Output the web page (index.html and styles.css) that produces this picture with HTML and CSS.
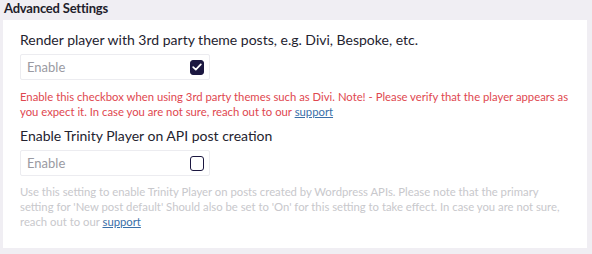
FILE: index.html
```html
<!DOCTYPE html>
<html>
<head>
    <title>Advanced Settings</title>
    <link rel="stylesheet" href="styles.css">
</head>
<body>
    <h2 class="section-title">Advanced Settings</h2>
    <div class="card">
        <div class="setting">
            <label class="setting-label">Render player with 3rd party theme posts, e.g. Divi, Bespoke, etc.</label>
            <div class="toggle-box">
                <span class="toggle-text">Enable</span>
                <span class="check checked">
                    <svg width="10" height="8" viewBox="0 0 10 8"><path d="M1.2 4.2 L3.8 6.6 L8.8 1.4" fill="none" stroke="#fff" stroke-width="1.7" stroke-linecap="round" stroke-linejoin="round"/></svg>
                </span>
            </div>
            <p class="help warn">Enable this checkbox when using 3rd party themes such as Divi. Note! - Please verify that the player appears as you expect it. In case you are not sure, reach out to our <a href="#">support</a></p>
        </div>
        <div class="setting">
            <label class="setting-label">Enable Trinity Player on API post creation</label>
            <div class="toggle-box">
                <span class="toggle-text">Enable</span>
                <span class="check"></span>
            </div>
            <p class="help muted">Use this setting to enable Trinity Player on posts created by Wordpress APIs. Please note that the primary setting for 'New post default' Should also be set to 'On' for this setting to take effect. In case you are not sure, reach out to our <a href="#">support</a></p>
        </div>
    </div>
</body>
</html>
```

FILE: styles.css
```css
body {
    margin: 0;
    padding: 0 5px 0 3px;
    background-color: #f0eef3;
    font-family: Lato, sans-serif;
    color: #24232f;
}
.section-title {
    margin: 0;
    padding: 0 0 0 1px;
    height: 20px;
    font-size: 13px;
    line-height: 16px;
    letter-spacing: -0.2px;
    font-weight: bold;
    color: #1f1d2b;
}
.card {
    background: white;
    padding: 12px 17px 0 17px;
    height: 216px;
}
.setting {
    margin-bottom: 9px;
}
.setting-label {
    display: block;
    font-size: 14px;
    line-height: 16px;
    margin-bottom: 6px;
}
.toggle-box {
    width: 190px;
    height: 26px;
    box-sizing: border-box;
    border: 1px solid #ececf0;
    border-radius: 2px;
    display: flex;
    align-items: center;
    justify-content: space-between;
    padding: 0 5px 0 6px;
}
.toggle-text {
    font-size: 13px;
    color: #9a9aa2;
}
.check {
    width: 14px;
    height: 15px;
    box-sizing: border-box;
    border: 1.5px solid #1b1740;
    border-radius: 3px;
    display: flex;
    align-items: center;
    justify-content: center;
}
.check.checked {
    background: #1b1740;
}
.help {
    margin: 9px 0 0 0;
    font-size: 11.3px;
    line-height: 15px;
    color: #e0474f;
}
.help.muted {
    margin-top: 8px;
    max-width: 545px;
    color: #c8c8cc;
}
.help a {
    color: #3a6fa8;
}
```
